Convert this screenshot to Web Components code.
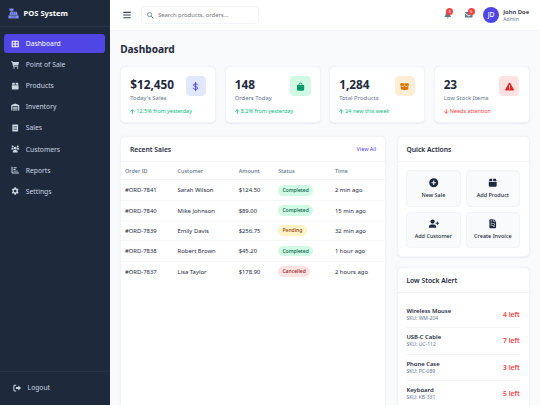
<!DOCTYPE html>
<html lang="en">
<head>
<meta charset="utf-8">
<title>POS System</title>
<style>
    html{
        font-size: 6.75px;
    }
    body{
        margin: 0;
        height: 100vh;
        overflow: hidden;
        font-family: "Noto Sans", "Open Sans", sans-serif;
        color: #1e293b;
        background: #f8fafc;
    }
</style>
</head>
<body>
<pos-app></pos-app>

<script>
// all icons are drawn on a 24x24 grid
const ICONS = {
    register: '<path d="M3 1h9v5H9v2h10l2 7H3l2-7h2V6H3z"/><path d="M1 16h22v6.500H1z"/><path d="M7 10.500h2M11 10.500h2M15 10.500h2M6.500 13h2M11 13h2M15.500 13h2M7 19.500h10" stroke="#1e293b" stroke-width="1"/>',
    grid: '<path fill-rule="evenodd" d="M4 2.500h16a2.500 2.500 0 0 1 2.500 2.500v14a2.500 2.500 0 0 1-2.500 2.500H4A2.500 2.500 0 0 1 1.500 19V5A2.500 2.500 0 0 1 4 2.500zM4.500 5.500v5h6v-5zM13.500 5.500v5h6v-5zM4.500 13.500v5h6v-5zM13.500 13.500v5h6v-5z"/>',
    cart: '<path d="M0 1h4.200L5 3h18.500l-2.800 10H7.500l.5 2.500h13V18H6L2.700 3.500H0z"/><circle cx="8.500" cy="21" r="2.200"/><circle cx="19" cy="21" r="2.200"/>',
    box: '<path d="M5 2h5.800v6H2.200l1.300-4.800Q4 2 5 2zM13.200 2H19q1 0 1.500 1.200L21.800 8h-8.600zM2 10h20v10a2 2 0 0 1-2 2H4a2 2 0 0 1-2-2z"/>',
    warehouse: '<path fill-rule="evenodd" d="M12 1.500 23 6.200q1 .5 1 1.600V22h-3.500V10h-17v12H0V7.800q0-1.100 1-1.600z"/><path d="M5 11.500h14V14H5zM5 15.500h14V18H5zM5 19.500h14V22H5z"/>',
    receipt: '<path fill-rule="evenodd" d="M3.500 1l2.200 1.500L8 1l2 1.500L12 1l2 1.500L16 1l2.300 1.500L20.500 1v22l-2.200-1.500L16 23l-2-1.500L12 23l-2-1.500L8 23l-2.300-1.500L3.500 23zM7 6.500V8h10V6.500zM7 11.200v1.500h10v-1.500zM7 16v1.500h10V16z"/>',
    users: '<circle cx="4.500" cy="4.500" r="3"/><circle cx="19.500" cy="4.500" r="3"/><circle cx="12" cy="9.500" r="4"/><path d="M0 13q0-4.500 4-4.500h2.500q-.5 3 1.500 5H0zM24 13q0-4.500-4-4.500h-2.500q.5 3-1.500 5h8zM4.500 22q0-7 5.500-7h4q5.500 0 5.500 7z"/>',
    chart: '<path d="M1 2h3v15.500q0 1.500 1.500 1.500H23v3H4q-3 0-3-3z"/><path d="M7 4h9v2.500H7zM7 9h6v2.500H7zM7 14h13v2.500H7z"/>',
    gear: '<path fill-rule="evenodd" d="M9.800 1h4.400l.7 3 2 1.100 2.900-.9L22 8l-2.200 2.200v3.600L22 16l-2.200 3.800-2.900-.9-2 1.100-.7 3H9.800l-.7-3-2-1.100-2.900.9L2 16l2.200-2.200v-3.600L2 8l2.200-3.800 2.900.9 2-1.100zM12 8.300a3.700 3.700 0 1 0 0 7.400 3.700 3.700 0 0 0 0-7.400z"/>',
    logout: '<path d="M9 2v3H5q-1.500 0-1.500 1.500v11Q3.500 19 5 19h4v3H4.500Q.5 22 .5 18V6q0-4 4-4z"/><path d="M15 4.500 23.500 12 15 19.500V15H8V9h7z"/>',
    menu: '<path d="M1 2.500h22v3.200H1zM1 10.400h22v3.200H1zM1 18.300h22v3.200H1z"/>',
    search: '<circle cx="9.800" cy="9.800" r="7.800" fill="none" stroke="currentColor" stroke-width="2.800"/><path d="M15.500 15.500 22.500 22.500" stroke="currentColor" stroke-width="3.200" stroke-linecap="round"/>',
    bell: '<path d="M10.500 0h3v2.500Q19 4 19 10q0 4.500 3 7.500V19H2v-1.500q3-3 3-7.500 0-6 5.500-7.500zM9 20.500h6q0 3-3 3t-3-3z"/>',
    mail: '<path d="M2 3.500h20q2 0 2 2L12 14 0 5.500q0-2 2-2zM0 8.500l12 8.500 12-8.500v9.500q0 2.500-2.500 2.500h-19Q0 20.500 0 18z"/>',
    dollar: '<path d="M12 1v22M17.500 7.800Q16.500 4.700 12 4.700 6.800 4.700 6.800 8.200q0 2.700 5.200 3.700 5.700 1.100 5.700 4.200 0 3.400-5.700 3.400-5 0-5.800-3.300" fill="none" stroke="currentColor" stroke-width="2.500" stroke-linecap="round"/>',
    bag: '<path fill-rule="evenodd" d="M7 8V6q0-5 5-5t5 5v2h4.500v11q0 4-4 4h-11q-4 0-4-4V8zM9.200 8h5.600V6q0-2.700-2.800-2.700T9.200 6zM7 11.500q0 1 1.100 1t1.100-1-1.100-1-1.100 1zM14.800 11.500q0 1 1.100 1t1.100-1-1.100-1-1.100 1z"/>',
    boxOpen: '<path d="M2.200 2.500 12 4l9.800-1.500L24 8q.3 1-.8 1.300L16.500 11Q15 11.300 14.200 10L12 6 9.800 10Q9 11.300 7.500 11L.8 9.300Q-.3 9 0 8z"/><path d="M2 10.800 7.500 12.300q2 .4 3-1.200L12 8.800l1.500 2.300q1 1.600 3 1.200L22 10.800V18q0 1.300-1.300 1.700L12 22l-8.700-2.300Q2 19.300 2 18z"/>',
    warning: '<path fill-rule="evenodd" d="M12 1.500q1.100 0 1.800 1L23.500 19.500q.8 2.500-1.500 3H2q-2.300-.5-1.500-3L10.200 2.500q.7-1 1.800-1zM10.800 8v7.500h2.400V8zM10.600 17v2.800h2.800V17z"/>',
    up: '<path d="M12 22V3M4 11l8-8 8 8" fill="none" stroke="currentColor" stroke-width="4" stroke-linecap="round" stroke-linejoin="round"/>',
    down: '<path d="M12 2v19M4 13l8 8 8-8" fill="none" stroke="currentColor" stroke-width="4" stroke-linecap="round" stroke-linejoin="round"/>',
    plus: '<path fill-rule="evenodd" d="M12 .5a11.500 11.500 0 1 0 0 23 11.500 11.500 0 0 0 0-23zM10.700 6.500h2.600v4.200h4.200v2.600h-4.200v4.200h-2.600v-4.200H6.500v-2.600h4.200z"/>',
    userPlus: '<circle cx="9" cy="6.500" r="5.500"/><path d="M-.5 22.500q0-8.500 7-8.500h5q7 0 7 8.500zM20 6.500h2.300v3.200h3.200V12h-3.200v3.200H20V12h-3.200V9.700H20z"/>',
    invoice: '<path fill-rule="evenodd" d="M6 .5h8V7h6.500v14q0 2.500-2.500 2.500H6Q3.500 23.500 3.500 21V3Q3.500.5 6 .5zM15.500.5l5 5h-5zM6.500 4v1.300H11V4zM6.500 7v1.300H11V7zM7 11.500v5h10v-5zM8.500 13h7v2h-7zM13 19v1.300h4.500V19z"/>'
};

customElements.define('pos-icon',
class extends HTMLElement {
    connectedCallback() {
        if(this.shadowRoot){return;}
        var shadow = this.attachShadow({mode: 'open'});
        shadow.innerHTML = `
        <style>
            :host{ display: block; flex: none; width: 1.125rem; height: 1.125rem; }
            svg{ display: block; width: 100%; height: 100%; overflow: visible; fill: currentColor; }
        </style>
        <svg viewBox="0 0 24 24" aria-hidden="true">${ICONS[this.getAttribute('name')]}</svg>`;
    }
});

customElements.define('nav-item',
class extends HTMLElement {
    connectedCallback() {
        if(this.shadowRoot){return;}
        var shadow = this.attachShadow({mode: 'open'});
        shadow.innerHTML = `
        <style>
            :host{
                display: flex;
                align-items: center;
                gap: .94rem;
                height: 2.875rem;
                margin-bottom: .25rem;
                padding: 0 1rem;
                box-sizing: border-box;
                border-radius: .5rem;
                color: #cbd5e1;
                font-size: 1rem;
                cursor: pointer;
            }
            :host([active]){ background: #4f46e5; color: #fff; }
            pos-icon{ width: 1.25rem; height: 1.2rem; }
        </style>
        <pos-icon name="${this.getAttribute('icon')}"></pos-icon>
        <slot></slot>`;
    }
});

customElements.define('side-bar',
class extends HTMLElement {
    connectedCallback() {
        if(this.shadowRoot){return;}
        var shadow = this.attachShadow({mode: 'open'});
        shadow.innerHTML = `
        <style>
            :host{
                display: flex;
                flex-direction: column;
                min-height: 0;
                background: #1e293b;
                color: #fff;
            }
            .logo{
                display: flex;
                align-items: center;
                gap: .7rem;
                height: 4.07rem;
                padding: 0 1.15rem;
                box-sizing: border-box;
                border-bottom: 1px solid #273244;
                font-size: 1.125rem;
                font-weight: 700;
            }
            .logo pos-icon{ width: 1.65rem; height: 1.65rem; color: #818cf8; }
            nav{ flex: 1; min-height: 0; padding: .95rem .625rem 0; }
            .foot{
                padding: .9rem .9rem 1.1rem;
                border-top: 1px solid #273244;
            }
            .foot nav-item{ margin: 0; }
        </style>
        <div class="logo"><pos-icon name="register"></pos-icon>POS System</div>
        <nav>
            <nav-item icon="grid" active>Dashboard</nav-item>
            <nav-item icon="cart">Point of Sale</nav-item>
            <nav-item icon="box">Products</nav-item>
            <nav-item icon="warehouse">Inventory</nav-item>
            <nav-item icon="receipt">Sales</nav-item>
            <nav-item icon="users">Customers</nav-item>
            <nav-item icon="chart">Reports</nav-item>
            <nav-item icon="gear">Settings</nav-item>
        </nav>
        <div class="foot"><nav-item icon="logout">Logout</nav-item></div>`;
    }
});

customElements.define('notify-button',
class extends HTMLElement {
    connectedCallback() {
        if(this.shadowRoot){return;}
        var shadow = this.attachShadow({mode: 'open'});
        shadow.innerHTML = `
        <style>
            :host{ display: block; position: relative; color: #64748b; }
            span{
                position: absolute;
                top: -.5rem;
                right: -.3rem;
                width: 1.04rem;
                height: 1.04rem;
                border-radius: 50%;
                background: #ef4444;
                color: #fff;
                font-size: .625rem;
                line-height: 1.04rem;
                text-align: center;
            }
        </style>
        <pos-icon name="${this.getAttribute('icon')}"></pos-icon>
        <span><slot></slot></span>`;
    }
});

customElements.define('top-bar',
class extends HTMLElement {
    connectedCallback() {
        if(this.shadowRoot){return;}
        var shadow = this.attachShadow({mode: 'open'});
        shadow.innerHTML = `
        <style>
            :host{
                display: flex;
                align-items: center;
                height: 31px;
                padding: 0 1.6rem 0 2rem;
                box-sizing: border-box;
                background: #fff;
                border-bottom: 1px solid #f1f4f8;
            }
            .menu{ width: 1.2rem; height: 1.2rem; color: #334155; }
            .search{
                display: flex;
                align-items: center;
                gap: .65rem;
                width: 17.4rem;
                height: 2.6rem;
                margin-left: 1.45rem;
                padding: 0 .75rem;
                box-sizing: border-box;
                border: 1px solid #f0f3f7;
                border-radius: .5rem;
            }
            .search pos-icon{ width: .95rem; height: .95rem; color: #64748b; }
            input{
                flex: 1;
                min-width: 0;
                padding: 0;
                border: 0;
                outline: 0;
                background: none;
                font: .875rem "Noto Sans", sans-serif;
            }
            input::placeholder{ color: #757575; opacity: 1; }
            .right{ display: flex; align-items: center; margin-left: auto; }
            notify-button{ margin-right: 2.05rem; }
            notify-button + notify-button{ margin-right: 1.55rem; }
            .avatar{
                width: 2.375rem;
                height: 2.375rem;
                border-radius: 50%;
                background: #4f46e5;
                color: #fff;
                font-size: 1rem;
                font-weight: 500;
                line-height: 2.375rem;
                text-align: center;
            }
            .user{ margin-left: .62rem; font-size: .875rem; line-height: 1.19rem; }
            .user b{ display: block; font-weight: 600; }
            .user small{ display: block; font-size: .75rem; line-height: 1.02rem; color: #64748b; }
        </style>
        <pos-icon class="menu" name="menu"></pos-icon>
        <div class="search">
            <pos-icon name="search"></pos-icon>
            <input type="text" placeholder="Search products, orders...">
        </div>
        <div class="right">
            <notify-button icon="bell">3</notify-button>
            <notify-button icon="mail">5</notify-button>
            <div class="avatar">JD</div>
            <div class="user"><b>John Doe</b><small>Admin</small></div>
        </div>`;
    }
});

customElements.define('stat-card',
class extends HTMLElement {
    connectedCallback() {
        if(this.shadowRoot){return;}
        var dir = this.getAttribute('dir-icon');
        var shadow = this.attachShadow({mode: 'open'});
        shadow.innerHTML = `
        <style>
            :host{
                display: block;
                height: 8.5rem;
                padding: 1.35rem;
                box-sizing: border-box;
                background: #fff;
                border: 1px solid #f1f4f8;
                border-radius: .75rem;
                box-shadow: 0 .5px 1.5px rgba(15,23,42,.06);
            }
            .top{ display: flex; justify-content: space-between; }
            .value{ font-size: 1.75rem; font-weight: 700; line-height: 2.38rem; }
            .label{ margin-top: .25rem; font-size: .875rem; line-height: 1.19rem; color: #64748b; }
            .badge{
                display: flex;
                align-items: center;
                justify-content: center;
                width: 3rem;
                height: 3rem;
                border-radius: .625rem;
            }
            .badge pos-icon{ width: 1.35rem; height: 1.35rem; }
            .indigo{ background: #e0e7ff; color: #4f46e5; }
            .green{ background: #d1fae5; color: #059669; }
            .orange{ background: #ffedd5; color: #d97706; }
            .red{ background: #fee2e2; color: #dc2626; }
            .trend{
                display: flex;
                align-items: center;
                gap: .22rem;
                margin-top: .84rem;
                font-size: .8125rem;
                line-height: 1.1rem;
                color: #10b981;
            }
            .trend.down{ color: #ef4444; }
            .trend pos-icon{ width: .68rem; height: .75rem; }
        </style>
        <div class="top">
            <div>
                <div class="value">${this.getAttribute('value')}</div>
                <div class="label">${this.getAttribute('label')}</div>
            </div>
            <div class="badge ${this.getAttribute('color')}"><pos-icon name="${this.getAttribute('icon')}"></pos-icon></div>
        </div>
        <div class="trend ${dir}"><pos-icon name="${dir}"></pos-icon><slot></slot></div>`;
    }
});

customElements.define('ui-panel',
class extends HTMLElement {
    connectedCallback() {
        if(this.shadowRoot){return;}
        var shadow = this.attachShadow({mode: 'open'});
        shadow.innerHTML = `
        <style>
            :host{
                display: block;
                background: #fff;
                border: 1px solid #f1f4f8;
                border-radius: .75rem;
                box-shadow: 0 .5px 1.5px rgba(15,23,42,.06);
            }
            header{
                display: flex;
                align-items: center;
                justify-content: space-between;
                height: 25px;
                padding: 0 1.3rem;
                box-sizing: border-box;
                border-bottom: 1px solid #eef1f6;
            }
            h2{ margin: 0; font-size: 1rem; font-weight: 600; }
        </style>
        <header><h2>${this.getAttribute('heading')}</h2><slot name="action"></slot></header>
        <slot></slot>`;
    }
});

customElements.define('sales-table',
class extends HTMLElement {
    connectedCallback() {
        if(this.shadowRoot){return;}
        var sales = [
            ['#ORD-7841', 'Sarah Wilson', '$124.50', 'Completed', '2 min ago'],
            ['#ORD-7840', 'Mike Johnson', '$89.00', 'Completed', '15 min ago'],
            ['#ORD-7839', 'Emily Davis', '$256.75', 'Pending', '32 min ago'],
            ['#ORD-7838', 'Robert Brown', '$45.20', 'Completed', '1 hour ago'],
            ['#ORD-7837', 'Lisa Taylor', '$178.90', 'Cancelled', '2 hours ago']
        ];
        var rows = '';
        for(var i=0; i<sales.length; i++){
            var s = sales[i];
            rows += `<tr><td>${s[0]}</td><td>${s[1]}</td><td>${s[2]}</td><td><span class="${s[3].toLowerCase()}">${s[3]}</span></td><td>${s[4]}</td></tr>`;
        }
        var shadow = this.attachShadow({mode: 'open'});
        shadow.innerHTML = `
        <style>
            :host{ display: block; }
            table, thead, tbody{ display: block; }
            tr{
                display: grid;
                grid-template-columns: 7.8rem 9.05rem 5.87rem 8.4rem 1fr;
                align-items: center;
                height: 3rem;
                box-sizing: border-box;
                padding-left: .56rem;
                border-bottom: 1px solid #f5f7fa;
            }
            thead tr{ height: 18px; border-bottom-color: #f1f4f8; }
            tbody tr:last-child{ border-bottom: 0; }
            th, td{ padding: 0; text-align: left; white-space: nowrap; }
            th{ font-size: .8125rem; font-weight: 500; color: #64748b; }
            td{ display: flex; align-items: center; font-size: .875rem; }
            tbody{ padding-top: .1rem; }
            span{
                padding: 0 .62rem;
                border-radius: 1rem;
                font-size: .75rem;
                font-weight: 500;
                line-height: 1.6rem;
            }
            .completed{ background: #d1fae5; color: #065f46; }
            .pending{ background: #fef3c7; color: #92400e; }
            .cancelled{ background: #fee2e2; color: #991b1b; }
        </style>
        <table>
            <thead><tr><th>Order ID</th><th>Customer</th><th>Amount</th><th>Status</th><th>Time</th></tr></thead>
            <tbody>${rows}</tbody>
        </table>`;
    }
});

customElements.define('quick-action',
class extends HTMLElement {
    connectedCallback() {
        if(this.shadowRoot){return;}
        var shadow = this.attachShadow({mode: 'open'});
        shadow.innerHTML = `
        <style>
            :host{
                display: flex;
                flex-direction: column;
                align-items: center;
                gap: .65rem;
                height: 36.500px;
                padding-top: 1rem;
                box-sizing: border-box;
                background: #f8fafc;
                border: 1px solid #f0f3f7;
                border-radius: .625rem;
                font-size: .8125rem;
                font-weight: 500;
                line-height: 1.1rem;
                white-space: nowrap;
            }
            pos-icon{ width: 1.4rem; height: 1.4rem; }
        </style>
        <pos-icon name="${this.getAttribute('icon')}"></pos-icon>
        <slot></slot>`;
    }
});

customElements.define('stock-item',
class extends HTMLElement {
    connectedCallback() {
        if(this.shadowRoot){return;}
        var shadow = this.attachShadow({mode: 'open'});
        shadow.innerHTML = `
        <style>
            :host{
                display: flex;
                align-items: center;
                justify-content: space-between;
                height: 26.500px;
                box-sizing: border-box;
                border-bottom: 1px solid #f3f5f9;
            }
            b{ display: block; font-size: .875rem; font-weight: 600; line-height: 1.2rem; }
            small{ display: block; font-size: .75rem; line-height: 1.15rem; color: #64748b; }
            .left{ font-size: 1rem; font-weight: 600; color: #ef4444; }
        </style>
        <div><b><slot></slot></b><small>SKU: ${this.getAttribute('sku')}</small></div>
        <div class="left">${this.getAttribute('count')} left</div>`;
    }
});

customElements.define('pos-app',
class extends HTMLElement {
    connectedCallback() {
        if(this.shadowRoot){return;}
        var shadow = this.attachShadow({mode: 'open'});
        shadow.innerHTML = `
        <style>
            :host{
                display: grid;
                grid-template-columns: 16.25rem minmax(0, 1fr);
                grid-template-rows: 100vh;
                height: 100vh;
                overflow: hidden;
            }
            main{ padding: 0 1.55rem; }
            h1{ margin: 0; padding: 11.800px 0 9.500px; font-size: 1.5rem; line-height: 2.04rem; font-weight: 700; }
            .stats{ display: grid; grid-template-columns: repeat(4, minmax(0, 1fr)); gap: 1.25rem; }
            .cols{
                display: grid;
                grid-template-columns: minmax(0, 2fr) minmax(0, 1fr);
                gap: 1.58rem;
                margin-top: 12.600px;
            }
            .side{ display: flex; flex-direction: column; gap: 1.53rem; }
            .actions{
                display: grid;
                grid-template-columns: repeat(2, minmax(0, 1fr));
                gap: 4.900px;
                padding: 8.200px 1.25rem 7.600px;
            }
            .stock{ padding: 8.700px 1.3rem; }
            a{ font-size: .8125rem; color: #4f46e5; text-decoration: none; }
        </style>
        <side-bar></side-bar>
        <div>
            <top-bar></top-bar>
            <main>
                <h1>Dashboard</h1>
                <div class="stats">
                    <stat-card value="$12,450" label="Today's Sales" icon="dollar" color="indigo" dir-icon="up">12.5% from yesterday</stat-card>
                    <stat-card value="148" label="Orders Today" icon="bag" color="green" dir-icon="up">8.2% from yesterday</stat-card>
                    <stat-card value="1,284" label="Total Products" icon="boxOpen" color="orange" dir-icon="up">24 new this week</stat-card>
                    <stat-card value="23" label="Low Stock Items" icon="warning" color="red" dir-icon="down">Needs attention</stat-card>
                </div>
                <div class="cols">
                    <ui-panel heading="Recent Sales">
                        <a slot="action">View All</a>
                        <sales-table></sales-table>
                    </ui-panel>
                    <div class="side">
                        <ui-panel heading="Quick Actions">
                            <div class="actions">
                                <quick-action icon="plus">New Sale</quick-action>
                                <quick-action icon="box">Add Product</quick-action>
                                <quick-action icon="userPlus">Add Customer</quick-action>
                                <quick-action icon="invoice">Create Invoice</quick-action>
                            </div>
                        </ui-panel>
                        <ui-panel heading="Low Stock Alert">
                            <div class="stock">
                                <stock-item sku="WM-204" count="4">Wireless Mouse</stock-item>
                                <stock-item sku="UC-112" count="7">USB-C Cable</stock-item>
                                <stock-item sku="PC-089" count="3">Phone Case</stock-item>
                                <stock-item sku="KB-331" count="5">Keyboard</stock-item>
                            </div>
                        </ui-panel>
                    </div>
                </div>
            </main>
        </div>`;
    }
});
</script>
</body>
</html>
